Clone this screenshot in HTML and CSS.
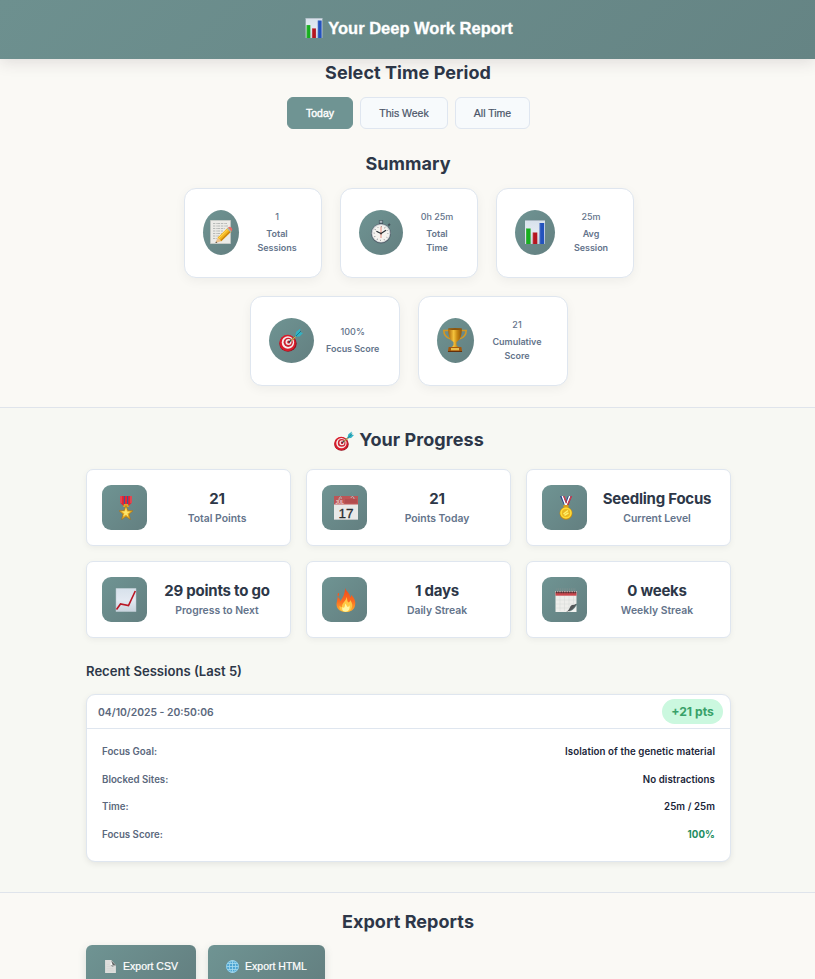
FILE: index.html
```html
<!DOCTYPE html>
<html lang="en">
<head>
<meta charset="utf-8">
<title>Your Deep Work Report</title>
<link rel="stylesheet" href="styles.css">
</head>
<body>
<svg class="defs" aria-hidden="true">
  <defs>
    <linearGradient id="paper" x1="0" y1="0" x2="0" y2="1"><stop offset="0" stop-color="#d7e1eb"/><stop offset=".5" stop-color="#e3e9f2"/><stop offset="1" stop-color="#c9d3dd"/></linearGradient>
    <linearGradient id="gold" x1="0" y1="0" x2="1" y2="0"><stop offset="0" stop-color="#a9630a"/><stop offset=".4" stop-color="#f5c33c"/><stop offset=".65" stop-color="#c98a14"/><stop offset="1" stop-color="#8f5208"/></linearGradient>
    <linearGradient id="flame" x1="0" y1="0" x2="0" y2="1"><stop offset="0" stop-color="#ee4a1c"/><stop offset=".55" stop-color="#fb6c21"/><stop offset="1" stop-color="#ffb32f"/></linearGradient>
    <symbol id="bars" viewBox="0 0 24 24">
      <path fill="url(#paper)" d="M2 0h20v24H2z"/><path d="M2 .5h20" stroke="#a9b7c1"/>
      <path fill="#18ae20" d="M3 8.500h4.600V24H3z"/><path fill="#b51620" d="M9.700 12.500h4.600V24H9.700z"/><path fill="#2352bd" d="M16.500 3h4.700v21h-4.700z"/>
      <path d="M3.400 9v15M10 13v11M17 3.500V24" stroke="#fff" stroke-opacity=".2" stroke-width=".8"/>
    </symbol>
    <symbol id="dart" viewBox="0 0 24 24">
      <ellipse cx="9" cy="15.600" rx="8.700" ry="8.100" fill="#8f1421"/><circle cx="8.600" cy="15" r="8.200" fill="#d91c2a"/>
      <circle cx="8.900" cy="14.500" r="6.200" fill="#f5eeee"/><circle cx="9.200" cy="14.300" r="4.600" fill="#cf2230"/><circle cx="9.500" cy="14.100" r="3" fill="#f4e8e8"/><circle cx="9.700" cy="14" r="1.500" fill="#bb1728"/>
      <path d="M10 14l10-8.500" stroke="#16404c" stroke-width="1.300"/><path d="M12 12.500l5-4.300" stroke="#d9a447" stroke-width="1.300"/>
      <path fill="#31b3c4" d="M16 8.800l1.200-5L21.500.5l-.7 3.600 3.200.8-3.500 3.600z"/><path d="M17 8l5-5" stroke="#126b82" stroke-width=".8"/>
    </symbol>
    <symbol id="memo" viewBox="0 0 24 24">
      <path fill="#ecebe7" stroke="#c9cac5" stroke-width=".6" d="M1.500.3h20v23.400h-20z"/>
      <path d="M4 3.500h14M4 6h15M4 8.500h12M4 11h10M4 13.500h9M4 16h6M4 18.500h4" stroke="#a0a5a4" stroke-width=".7" stroke-dasharray="2 .7 1 .5 3 .8"/>
      <path fill="#f4b51d" d="M8.500 17.800L19 7.600l3.500 3.600-10.300 10.100z"/><path d="M9.500 18.600L20 8.400" stroke="#ffdc5c" stroke-width="1"/><path fill="#cb860f" d="M11.100 20.200L21.600 10.100l.9 1.100-10.300 10.100z"/>
      <path fill="#edc28e" d="M8.500 17.800l-2 5.200 5.700-1.700z"/><path fill="#333" d="M7 21.600L6.500 23l1.800-.5z"/>
      <path fill="#a5b4b8" d="M18 8.600l1-1 3.500 3.600-1 1z"/><path fill="#e86a66" d="M19 7.600c1-1 2-1.400 3.300-.2s1.300 2.600.2 3.800z"/>
    </symbol>
    <symbol id="watch" viewBox="0 0 24 24">
      <path fill="#44555f" d="M9.900.3h4.200v4H9.900z"/><path fill="#aab6be" d="M10.700.8h2.600v2h-2.600z"/><path d="M19.200 5.400l1.800-1.500" stroke="#46525c" stroke-width="2"/>
      <circle cx="12" cy="13.500" r="10" fill="#53606b"/><circle cx="12" cy="13.200" r="9.300" fill="#c9ced3"/><circle cx="12" cy="13.500" r="8.400" fill="#f5f3ef"/>
      <circle cx="12" cy="13.500" r="6.900" fill="none" stroke="#6c7277" stroke-width="1.200" stroke-dasharray=".6 3.010"/>
      <path d="M12 13.500L7.400 11.300M12 13.500l5-3.200" stroke="#272f35" stroke-width="1.200"/><path d="M12 6.500V18" stroke="#e37263" stroke-width=".8"/><circle cx="12" cy="13.500" r="1" fill="#333"/>
    </symbol>
    <symbol id="trophy" viewBox="0 0 24 24">
      <path d="M6 2.500H.8c0 4.700 2.500 7.300 7 8.600M18 2.500h5.200c0 4.700-2.500 7.300-7 8.600" fill="none" stroke="#d39825" stroke-width="1.600"/>
      <path fill="url(#gold)" d="M5.200.6h13.600c0 7-1.300 11.300-5.300 13.500v3.200l2 1.700h-7l2-1.700v-3.200C6.500 11.900 5.200 7.600 5.200.6z"/><ellipse cx="12" cy="1" rx="6.800" ry=".9" fill="#8b560e"/>
      <path fill="#a4580c" d="M5.700 19h12.600l.9 4.800H4.800z"/><path fill="#e8bd4d" d="M8 20h8v2.300H8z"/><path d="M5 23.500h14" stroke="#632f0a"/>
    </symbol>
    <symbol id="military" viewBox="0 0 24 24">
      <path fill="#ed2330" d="M6 0h12v6.500L14.500 10h-5L6 6.500z"/><path d="M10.400 0v9.500M13.600 0v9.500" stroke="#46588b" stroke-width="1.200"/><path d="M7 0v7M17 0v7" stroke="#b9a5aa" stroke-width=".6"/><path fill="#dca629" d="M10 8h4l1 3H9z"/>
      <path fill="#e5aa21" stroke="#ad6d0c" stroke-width=".5" d="M12 9.600l1.900 4.800 5.100.4-4 3.400 1.400 5.300-4.400-2.900-4.400 2.900L9 18.200l-4-3.400 5.100-.4z"/><path fill="#ffe56a" d="M12 11.500l1 4 3.500.2-3 1.700.8 3.300-2.300-2-2.900 1.800 1.300-3.300-3-1.800 3.500-.1z"/>
    </symbol>
    <symbol id="calendar" viewBox="0 0 24 24">
      <path fill="#e9e9e8" d="M0 0h24v24H0z"/><path fill="#bd5556" d="M0 0h24v8.500H0z"/><path fill="#a44247" d="M11 3h12v4H11z" opacity=".4"/>
      <path d="M5 4c0-4 3-4 2-1M17 2c1-3 3-1 3 1" fill="none" stroke="#b9c2c2" stroke-width="1"/><path d="M0 23.500h24" stroke="#bfc5c5"/>
      <text class="cal-month" x="1.500" y="8">JUL</text><text class="cal-day" x="4.500" y="21.500">17</text>
    </symbol>
    <symbol id="medal" viewBox="0 0 24 24">
      <path fill="#29458e" d="M6 0h4l3.500 10h-3zM18 0h-4l-4 10h4z"/><path d="M8.300 0l3.300 9M15.700 0l-3.300 9" stroke="#fff" stroke-width="1.500"/><path d="M9.800 0l2.800 7M17.500 0l-4 9" stroke="#d83945" stroke-width="1.300"/>
      <path fill="#d99d18" d="M9.500 9h5v3h-5z"/><circle cx="12" cy="17.300" r="6.400" fill="#c68911"/><circle cx="12" cy="17" r="5.800" fill="#ffdb37"/><circle cx="12" cy="17" r="4.100" fill="#eab622"/><path d="M9.500 18l4.500-3.500M10.500 19.300l4-2.500" stroke="#fff16b" stroke-width="1.500"/>
    </symbol>
    <symbol id="chart" viewBox="0 0 24 24">
      <path fill="url(#paper)" stroke="#b8c6cc" stroke-width=".5" d="M2 .3h20v23.400H2z"/><path d="M2.500 21.500L6.500 16l8 1.500L21.300 3" fill="none" stroke="#ba1725" stroke-width="1.600"/>
    </symbol>
    <symbol id="fire" viewBox="0 0 24 24">
      <path fill="url(#flame)" d="M11.300 0c.4 3.200 5.100 5.300 4.700 9.200.9-.6 1.300-1.500 1.200-2.500 3.700 4 4.700 7 3.800 11-.9 4-4.500 6.300-9 6.300-5.700 0-9.500-3-9.500-7.500 0-2.500 1-4.500 1.200-7.500 1.700 1 2.500 2.400 2.300 4.200C9 10 10.600 6 11.300 0zM4 5c2-.5 1 2.800.3 3.600C3.500 8 3.300 6 4 5z"/>
      <path fill="#ffc844" d="M12.600 9c1 3 .3 4 2 5.500 1-.4 1.600-1.500 1.700-2.500 2 3 2.600 5.500 1.300 8.200-1 2.400-3.100 3.600-6 3.600-4 0-6.600-2.300-6-6 .9 1 1.500 1.500 2.400 1.300C7.500 15 12 13.500 12.600 9z"/><path fill="#fff6a4" d="M11.600 15.500c1 2 1.200 3 2.200 3.500 1-.2 1.300-1 1.500-1.700 1.200 3.500-.8 6.400-3.600 6.400-3.100 0-4-2-3.300-4.700.8 1 1.600 1 2.100.1.500-1 .3-2.100 1.100-3.600z"/>
    </symbol>
    <symbol id="spiral" viewBox="0 0 24 24">
      <path fill="#eeeeeb" d="M1.500 3h21v12.500L15 24H1.500z"/><path d="M6 8v15M10.500 8v15M15 8v12M19.500 8v9M2 12h20M2 16h18M2 20h15" stroke="#d6d9d7" stroke-width=".5"/><path fill="#c9464c" d="M1.500 4h21v3.700h-21z"/><path d="M2 4.200h20" stroke="#4d3437" stroke-width="2" stroke-dasharray="1.200 .5"/><path d="M2.500 1.500h19" stroke="#7d908f" stroke-width="2.500" stroke-dasharray=".8 1"/>
      <path fill="#535758" d="M22.500 15.500c-2 1.800-5 1-6 2.700-.7 1.700-2.300 4.800-4.500 5.600 5-.5 8.500-3.500 10.500-8.300z"/><path fill="#f3f3f0" d="M22.500 17v7H13c5-.5 7.500-3 9.500-7z"/>
    </symbol>
    <symbol id="page" viewBox="0 0 24 24">
      <path fill="#dededc" d="M2 0h11l9 10v14H2z"/><path fill="#5e6262" d="M13 0l9 10-7-.2z"/><path fill="#f9f9f8" d="M13 0l-1 9 3 4 7-3z"/><path fill="#5e6262" d="M13 1l9 9-6-1z"/><path fill="#969a99" d="M12 9l10 1-7 3z"/><path d="M5 8h5M5 12h7M5 16h12M5 20h14" stroke="#cfd0ce" stroke-width="1"/>
    </symbol>
    <symbol id="globe" viewBox="0 0 24 24">
      <circle cx="12" cy="12" r="11.700" fill="#4ba4d2"/><g fill="none" stroke="#a7dbef" stroke-width="1.500"><circle cx="12" cy="12" r="11"/><ellipse cx="12" cy="12" rx="5.800" ry="11"/><path d="M12 1v22M1 12h22M3 6.500h18M3 17.500h18"/></g>
    </symbol>
  </defs>
</svg>

<header class="header">
  <h1 class="title"><svg class="title-icon"><use href="#bars"/></svg><span>Your Deep Work Report</span></h1>
</header>

<main>
  <section class="period">
    <h2>Select Time Period</h2>
    <div class="period-buttons">
      <button class="period-button active">Today</button>
      <button class="period-button week">This Week</button>
      <button class="period-button all">All Time</button>
    </div>
  </section>

  <section class="summary">
    <h2>Summary</h2>
    <div class="summary-cards">
      <article class="summary-card"><div class="round sessions"><svg class="emoji"><use href="#memo"/></svg></div><div class="summary-text"><span>1</span><strong>Total<br>Sessions</strong></div></article>
      <article class="summary-card"><div class="round time"><svg class="emoji"><use href="#watch"/></svg></div><div class="summary-text"><span>0h 25m</span><strong>Total<br>Time</strong></div></article>
      <article class="summary-card"><div class="round average"><svg class="emoji"><use href="#bars"/></svg></div><div class="summary-text"><span>25m</span><strong>Avg<br>Session</strong></div></article>
    </div>
    <div class="summary-cards">
      <article class="summary-card wide"><div class="round focus"><svg class="emoji"><use href="#dart"/></svg></div><div class="summary-text"><span>100%</span><strong>Focus Score</strong></div></article>
      <article class="summary-card wide"><div class="round cumulative"><svg class="emoji"><use href="#trophy"/></svg></div><div class="summary-text"><span>21</span><strong>Cumulative<br>Score</strong></div></article>
    </div>
  </section>

  <section class="progress">
    <h2 class="progress-title"><svg class="heading-icon"><use href="#dart"/></svg><span>Your Progress</span></h2>
    <div class="progress-grid">
      <article class="progress-card"><div class="square"><svg class="emoji"><use href="#military"/></svg></div><div class="progress-text"><strong>21</strong><span>Total Points</span></div></article>
      <article class="progress-card"><div class="square"><svg class="emoji"><use href="#calendar"/></svg></div><div class="progress-text"><strong>21</strong><span>Points Today</span></div></article>
      <article class="progress-card"><div class="square"><svg class="emoji"><use href="#medal"/></svg></div><div class="progress-text"><strong>Seedling Focus</strong><span>Current Level</span></div></article>
      <article class="progress-card"><div class="square"><svg class="emoji"><use href="#chart"/></svg></div><div class="progress-text"><strong>29 points to go</strong><span>Progress to Next</span></div></article>
      <article class="progress-card"><div class="square"><svg class="emoji"><use href="#fire"/></svg></div><div class="progress-text"><strong>1 days</strong><span>Daily Streak</span></div></article>
      <article class="progress-card"><div class="square"><svg class="emoji"><use href="#spiral"/></svg></div><div class="progress-text"><strong>0 weeks</strong><span>Weekly Streak</span></div></article>
    </div>
    <h3>Recent Sessions (Last 5)</h3>
    <article class="session">
      <div class="session-header"><span>04/10/2025 - 20:50:06</span><span class="points">+21 pts</span></div>
      <dl class="details">
        <div><dt>Focus Goal:</dt><dd>Isolation of the genetic material</dd></div>
        <div><dt>Blocked Sites:</dt><dd>No distractions</dd></div>
        <div><dt>Time:</dt><dd>25m / 25m</dd></div>
        <div><dt>Focus Score:</dt><dd class="score">100%</dd></div>
      </dl>
    </article>
  </section>

  <section class="export">
    <h2>Export Reports</h2>
    <div class="export-buttons">
      <button class="export-button csv"><svg><use href="#page"/></svg><span>Export CSV</span></button>
      <button class="export-button html"><svg><use href="#globe"/></svg><span>Export HTML</span></button>
    </div>
  </section>
</main>
</body>
</html>
```
FILE: styles.css
```css
* { box-sizing: border-box; }

body {
  margin: 0;
  height: 979px;
  overflow: hidden;
  background: #faf9f5;
  color: #2d3748;
  font-family: Inter, sans-serif;
}

.defs { position: absolute; width: 0; height: 0; }

h1, h2, h3, dl, dd { margin: 0; }

button {
  padding: 0;
  border: 0;
  font-family: "Liberation Sans", sans-serif;
  -webkit-text-stroke: .2px currentColor;
}

.header {
  height: 59px;
  display: flex;
  justify-content: center;
  padding: 18px 0 0 2px;
  position: relative;
  background: linear-gradient(135deg, #6d908f, #658484);
  box-shadow: 0 3px 15px rgba(60, 40, 60, .14);
}

.title {
  display: flex;
  gap: 4px;
  height: 21px;
  color: #fff;
  font: bold 16.5px/21px "Liberation Sans", sans-serif;
  -webkit-text-stroke: .3px #fff;
}

.title-icon { width: 20px; height: 20px; }

h2 {
  height: 26px;
  padding-left: 1px;
  text-align: center;
  font-size: 18px;
  line-height: 26px;
  font-weight: 700;
  letter-spacing: .06px;
}

.period { height: 92px; padding-top: 1px; }

.period-buttons { display: flex; justify-content: center; gap: 7px; margin-top: 11px; padding-left: 2px; }

.period-button {
  width: 88px;
  height: 32px;
  border: 1px solid #dfe6f0;
  border-radius: 6px;
  background: #f7fafc;
  color: #4a5568;
  font-size: 10.5px;
}

.period-button.active { width: 66px; border-color: #6f9493; background: #6f9493; color: #fff; -webkit-text-stroke-width: .4px; }
.period-button.all { width: 75px; }

.summary { height: 256px; }
.summary-cards { display: flex; justify-content: center; gap: 18px; margin-top: 11px; padding-left: 3px; }
.summary-cards + .summary-cards { margin-top: 18px; }

.summary-card {
  width: 138px;
  height: 90px;
  display: flex;
  align-items: center;
  gap: 12px;
  padding: 0 18px 2px;
  background: #fff;
  border: 1px solid #dfe6ef;
  border-radius: 12px;
  box-shadow: 0 3px 11px rgba(0, 0, 0, .05);
}

.wide { width: 150px; }

.round, .square {
  flex: none;
  height: 45px;
  display: flex;
  justify-content: center;
  align-items: center;
  background: linear-gradient(135deg, #6f9493, #637f80);
}

.round { border-radius: 50%; }
.sessions { width: 36px; }
.time { width: 44px; }
.average { width: 40px; }
.focus { width: 45px; }
.cumulative { width: 37px; }

.emoji { width: 24px; height: 24px; }
.square .emoji { margin-left: 2px; }
.focus .emoji, .cumulative .emoji { margin-right: 2px; }

.summary-text {
  flex: 1;
  text-align: center;
  color: #64748b;
  font-size: 9px;
  line-height: 14px;
  font-weight: 500;
  white-space: nowrap;
}

.summary-text span, .summary-text strong { display: block; }
.summary-text strong { margin-top: 3px; font-weight: 600; letter-spacing: -.03px; }
.wide .summary-text { margin-right: 1px; }
.focus + .summary-text { flex: 0 0 51px; display: flex; flex-direction: column; align-items: center; }

.progress {
  height: 486px;
  padding: 19px 84px 0 86px;
  background: #f7f8f3;
  border: solid #dfe4eb;
  border-width: 1px 0;
}

.progress-title { display: flex; justify-content: center; gap: 4px; padding: 0; }
.heading-icon { width: 22px; height: 20px; margin-top: 4px; }

.progress-grid {
  display: grid;
  grid-template-columns: repeat(3, 205px);
  gap: 15px;
  margin-top: 16px;
}

.progress-card {
  height: 77px;
  display: flex;
  align-items: center;
  gap: 15px;
  padding: 0 18px 0 15px;
  background: #fff;
  border: 1px solid #dfe6ef;
  border-radius: 7px;
  box-shadow: 0 2px 6px rgba(0, 0, 0, .05);
}

.square { width: 45px; border-radius: 9px; }

.progress-text { flex: 1; text-align: center; white-space: nowrap; }
.progress-text strong, .progress-text span { display: block; }
.progress-text strong { font-size: 15px; line-height: 20px; font-weight: 700; letter-spacing: -.24px; }
.progress-text span { margin-top: 2px; color: #64748b; font-size: 10.4px; line-height: 16px; font-weight: 570; }

.cal-month { fill: #eed1d1; font: bold 4.5px "Liberation Sans", sans-serif; }
.cal-day { fill: #272c30; stroke: #272c30; stroke-width: .3px; font: 13.5px "Liberation Sans", sans-serif; }

h3 { margin-top: 23px; height: 20px; font-size: 13.1px; line-height: 20px; font-weight: 620; }

.session {
  height: 168px;
  margin-top: 13px;
  overflow: hidden;
  background: #fff;
  border: 1px solid #dfe6ef;
  border-radius: 9px;
  box-shadow: 0 2px 6px rgba(0, 0, 0, .08);
}

.session-header {
  height: 34px;
  display: flex;
  justify-content: space-between;
  align-items: center;
  padding: 0 7px 0 11px;
  border-bottom: 1px solid #dfe6ef;
  color: #5b687d;
  font-size: 10.35px;
  font-weight: 570;
}

.points {
  width: 61px;
  height: 25px;
  border-radius: 13px;
  background: #cbf8df;
  color: #38a169;
  text-align: center;
  font-size: 12.2px;
  line-height: 25px;
  font-weight: 700;
}

.details { padding: 12.4px 15px 0; font-size: 9.7px; }
.details > div { display: flex; justify-content: space-between; align-items: center; height: 20px; margin-bottom: 7.7px; }
.details dt { color: #5b687d; font-weight: 570; }
.details dd { color: #1a2539; font-weight: 640; letter-spacing: .08px; }
.details .score { color: #218c60; font-weight: 750; }

.export { padding: 16px 86px 0; }
.export-buttons { display: flex; gap: 12px; margin-top: 10px; }

.export-button {
  width: 110px;
  height: 42px;
  display: flex;
  justify-content: center;
  align-items: center;
  gap: 6px;
  border-radius: 6px;
  background: linear-gradient(135deg, #6f9493, #637f80);
  box-shadow: 0 3px 9px rgba(70, 100, 100, .18);
  color: #fff;
  font-size: 10.5px;
}

.export-button.html { width: 117px; }
.export-button svg { width: 13px; height: 13px; }
```
